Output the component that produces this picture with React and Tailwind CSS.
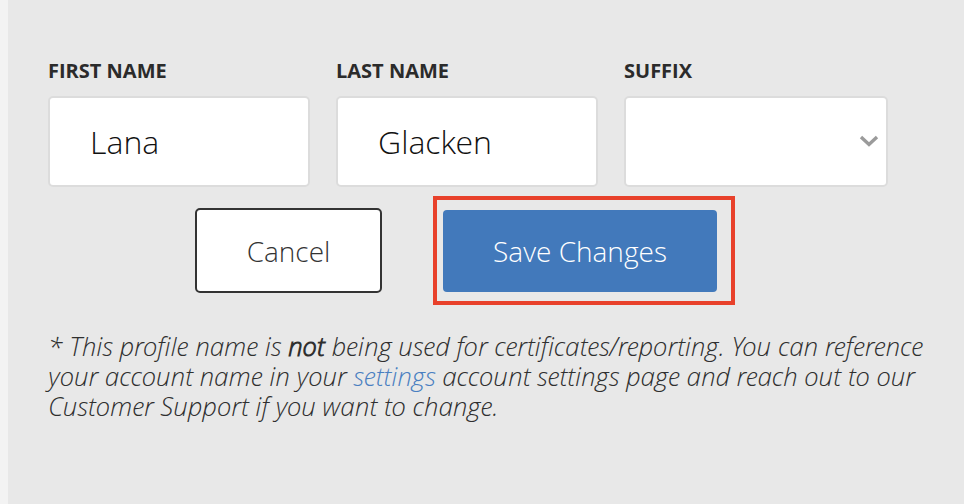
import { useState } from "react";

const font = { fontFamily: '"Open Sans", "Liberation Sans", sans-serif' };
const light = { fontFamily: '"Open Sans Light", "Open Sans", "Liberation Sans", sans-serif' };

const Field = ({ label, width = "w-[262px]", children }) => (
  <div className={`flex flex-col ${width}`}>
    <label className="text-[20px] leading-[26px] font-bold text-[#2b2b2b] uppercase mb-[12px]">
      {label}
    </label>
    {children}
  </div>
);

const App = () => {
  const [first, setFirst] = useState("Lana");
  const [last, setLast] = useState("Glacken");

  return (
    <div className="flex min-h-[504px] w-[964px] bg-[#e8e8e8]" style={font}>
      <div className="w-[8px] bg-[#f3f3f3]" />
      <div className="flex-1 pl-[40px] pr-[20px] pt-[58px]">
        <div className="flex gap-[26px]">
          <Field label="First Name">
            <input
              value={first}
              onChange={(e) => setFirst(e.target.value)}
              className="h-[91px] w-full rounded-[5px] border-2 border-[#dcdcdc] bg-white pl-[40px] text-[32px] font-light text-[#111] outline-none"
              style={light}
            />
          </Field>
          <Field label="Last Name">
            <input
              value={last}
              onChange={(e) => setLast(e.target.value)}
              className="h-[91px] w-full rounded-[5px] border-2 border-[#dcdcdc] bg-white pl-[40px] text-[32px] font-light text-[#111] outline-none"
              style={light}
            />
          </Field>
          <Field label="Suffix" width="w-[264px]">
            <div className="flex h-[91px] w-full items-center justify-end rounded-[5px] border-2 border-[#dcdcdc] bg-white pr-[7px]">
              <svg width="20" height="12" viewBox="0 0 20 12" className="mt-[-2px]">
                <path d="M2 2 L10 9.5 L18 2" fill="none" stroke="#9b9b9b" strokeWidth="3.4" />
              </svg>
            </div>
          </Field>
        </div>

        <div className="flex items-center mt-[9px] ml-[147px]">
          <button
            className="h-[85px] w-[187px] rounded-[5px] border-2 border-[#333] bg-white text-[28px] font-light text-[#333]"
            style={light}
          >
            Cancel
          </button>
          <div className="ml-[51px] border-4 border-[#e8412b] pl-[6px] pt-[10px] pr-[14px] pb-[9px]">
            <button
              className="h-[82px] w-[274px] rounded-[4px] bg-[#4279bb] text-[28px] font-light text-white"
              style={light}
            >
              Save Changes
            </button>
          </div>
        </div>

        <p
          className="mt-[26px] text-[26px] leading-[30px] italic font-light text-[#2f2f2f] max-w-[890px]"
          style={light}
        >
          * This profile name is <span className="font-bold">not</span> being used for
          certificates/reporting. You can reference your account name in your{" "}
          <a href="#" className="text-[#4a7fc1]">settings</a> account settings page and reach out
          to our Customer Support if you want to change.
        </p>
      </div>
    </div>
  );
};

export default App;
